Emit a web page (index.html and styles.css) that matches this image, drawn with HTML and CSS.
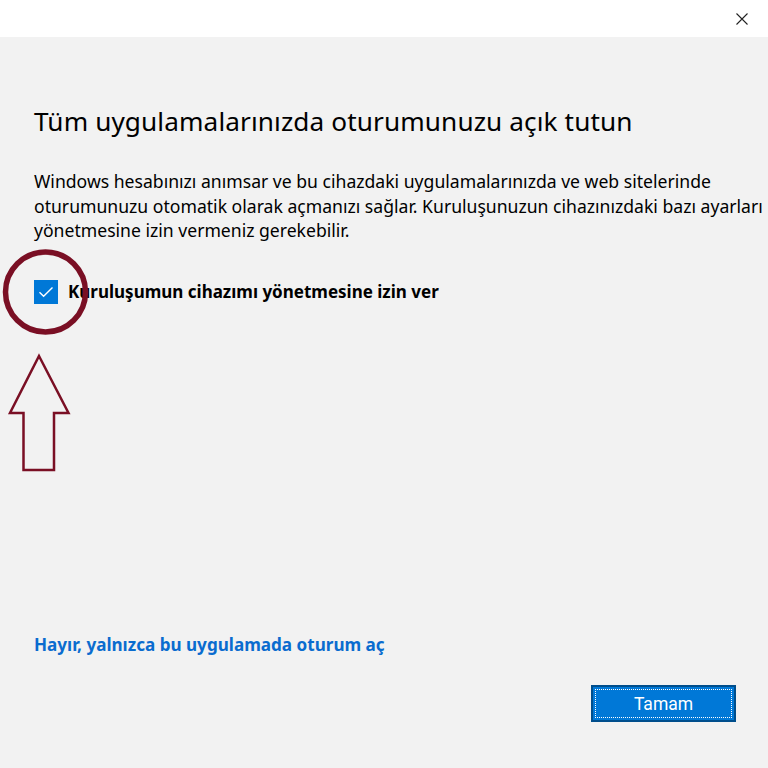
FILE: index.html
```html
<!DOCTYPE html>
<html lang="tr">
<head>
    <meta charset="UTF-8">
    <meta name="viewport" content="width=device-width, initial-scale=1.0">
    <title>Oturum aç</title>
    <link rel="stylesheet" href="styles.css">
</head>
<body>

    <!-- Title bar -->
    <div class="title-bar">
        <button class="close-button" aria-label="Kapat">
            <svg width="12" height="12" viewBox="0 0 12 12">
                <path d="M0.5 0.5 L11.5 11.5 M11.5 0.5 L0.5 11.5" stroke="#222" stroke-width="1.1" fill="none"/>
            </svg>
        </button>
    </div>

    <!-- Dialog content -->
    <div class="dialog">
        <h1 class="dialog-title">Tüm uygulamalarınızda oturumunuzu açık tutun</h1>
        <p class="dialog-text">Windows hesabınızı anımsar ve bu cihazdaki uygulamalarınızda ve web sitelerinde oturumunuzu otomatik olarak açmanızı sağlar. Kuruluşunuzun cihazınızdaki bazı ayarları yönetmesine izin vermeniz gerekebilir.</p>

        <label class="check-row">
            <span class="check-box">
                <svg width="16" height="12" viewBox="0 0 16 12">
                    <path d="M1.5 6.2 L5.6 10.2 L14.5 1.5" stroke="#fff" stroke-width="1.4" fill="none"/>
                </svg>
            </span>
            <span class="check-label">Kuruluşumun cihazımı yönetmesine izin ver</span>
        </label>

        <div class="spacer"></div>

        <a class="dialog-link" href="#">Hayır, yalnızca bu uygulamada oturum aç</a>

        <div class="dialog-footer">
            <button class="primary-button"><span>Tamam</span></button>
        </div>
    </div>

    <!-- Annotation drawn over the screenshot -->
    <svg class="annotation" width="100" height="200" viewBox="0 0 100 200">
        <circle cx="45.5" cy="52" r="40" stroke="#7a0f24" stroke-width="5.5" fill="none"/>
        <path d="M39 116 L68.5 173 L54 173 L54 230 L23.5 230 L23.5 173 L10 173 Z" stroke="#7a0f24" stroke-width="2.5" fill="none" stroke-linejoin="miter"/>
    </svg>

</body>
</html>
```

FILE: styles.css
```css
* {
    margin: 0;
    padding: 0;
    box-sizing: border-box;
    font-family: "Noto Sans", "Open Sans", sans-serif;
}

body {
    display: flex;
    flex-direction: column;
    height: 100vh;
    background: #f2f2f2;
    color: #000;
    overflow: hidden;
}

/* Title bar */
.title-bar {
    height: 37px;
    background: #fff;
    display: flex;
    justify-content: flex-end;
    align-items: center;
    padding-right: 10px;
}

.close-button {
    width: 32px;
    height: 32px;
    border: none;
    background: none;
    display: flex;
    align-items: center;
    justify-content: center;
}

/* Dialog */
.dialog {
    flex: 1;
    display: flex;
    flex-direction: column;
    padding: 66px 32px 46px 34px;
}

.dialog-title {
    font-size: 26.2px;
    font-weight: 400;
    line-height: 36px;
    letter-spacing: 0.1px;
}

.dialog-text {
    margin-top: 30px;
    margin-right: -32px;
    font-size: 17.6px;
    line-height: 24.5px;
}

.check-row {
    display: flex;
    align-items: center;
    margin-top: 37px;
    cursor: pointer;
}

.check-box {
    width: 24px;
    height: 24px;
    background: #0078d7;
    display: flex;
    align-items: center;
    justify-content: center;
}

.check-label {
    margin-left: 10px;
    font-size: 17px;
    font-weight: 700;
}

.spacer {
    flex: 1;
}

.dialog-link {
    font-size: 17.1px;
    font-weight: 700;
    color: #0a6ccf;
    text-decoration: none;
}

.dialog-footer {
    display: flex;
    justify-content: flex-end;
    margin-top: 29px;
}

.primary-button {
    width: 145px;
    height: 37px;
    background: #0078d7;
    border: 2px solid #004e8c;
    padding: 2px;
    color: #fff;
    font-size: 17.5px;
    cursor: pointer;
}

.primary-button span {
    display: flex;
    align-items: center;
    justify-content: center;
    height: 100%;
    border: 1px dotted #fff;
    font-family: Roboto, "Noto Sans", sans-serif;
}

/* Red annotation overlay */
.annotation {
    position: absolute;
    left: 0;
    top: 240px;
    overflow: visible;
}
```
